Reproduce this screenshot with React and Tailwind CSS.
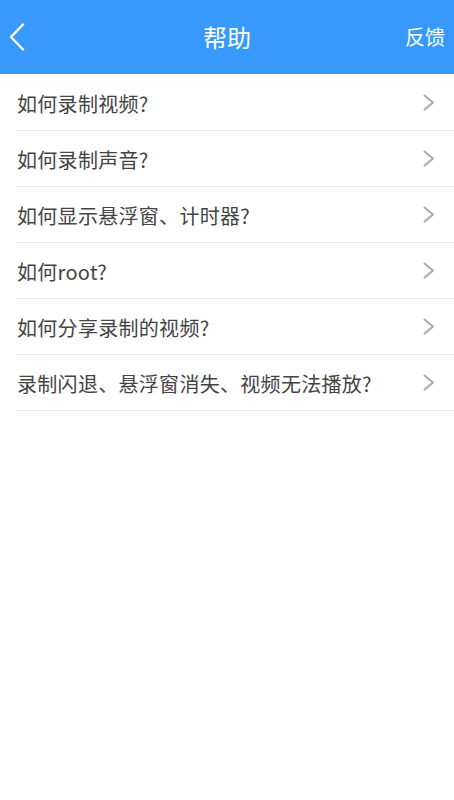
const items = [
  "如何录制视频?",
  "如何录制声音?",
  "如何显示悬浮窗、计时器?",
  "如何root?",
  "如何分享录制的视频?",
  "录制闪退、悬浮窗消失、视频无法播放?",
];

export default function App() {
  return (
    <div
      className="min-h-[800px] bg-white"
      style={{ fontFamily: '"Noto Sans CJK SC", "Noto Sans", sans-serif' }}
    >
      {/* 顶部栏 */}
      <div className="h-[74px] bg-[#3799fb] flex items-center justify-between text-white">
        <button className="w-[60px] h-full flex items-center pl-[9px]">
          <svg width="16" height="28" viewBox="0 0 16 28" fill="none">
            <path d="M14 1.5 L2 14 L14 26.5" stroke="white" strokeWidth="2.4" strokeLinecap="round" strokeLinejoin="round" />
          </svg>
        </button>
        <h1 className="text-[24px] leading-none">帮助</h1>
        <button className="w-[60px] h-full flex items-center justify-end pr-[9px] text-[20px]">反馈</button>
      </div>

      {/* 列表 */}
      <ul className="pt-[1px]">
        {items.map((text) => (
          <li key={text} className="pl-[16px]">
            <div className="h-[56px] flex items-center justify-between border-b border-[#ebebeb] pr-[19px]">
              <span className="text-[20px] tracking-[0.3px] text-[#444] pl-[1px] pt-[2px]">{text}</span>
              <svg width="12" height="17" viewBox="0 0 12 17" fill="none">
                <path d="M1.5 1.5 L10 8.5 L1.5 15.5" stroke="#aaaaaa" strokeWidth="2" strokeLinecap="round" strokeLinejoin="round" />
              </svg>
            </div>
          </li>
        ))}
      </ul>
    </div>
  );
}
